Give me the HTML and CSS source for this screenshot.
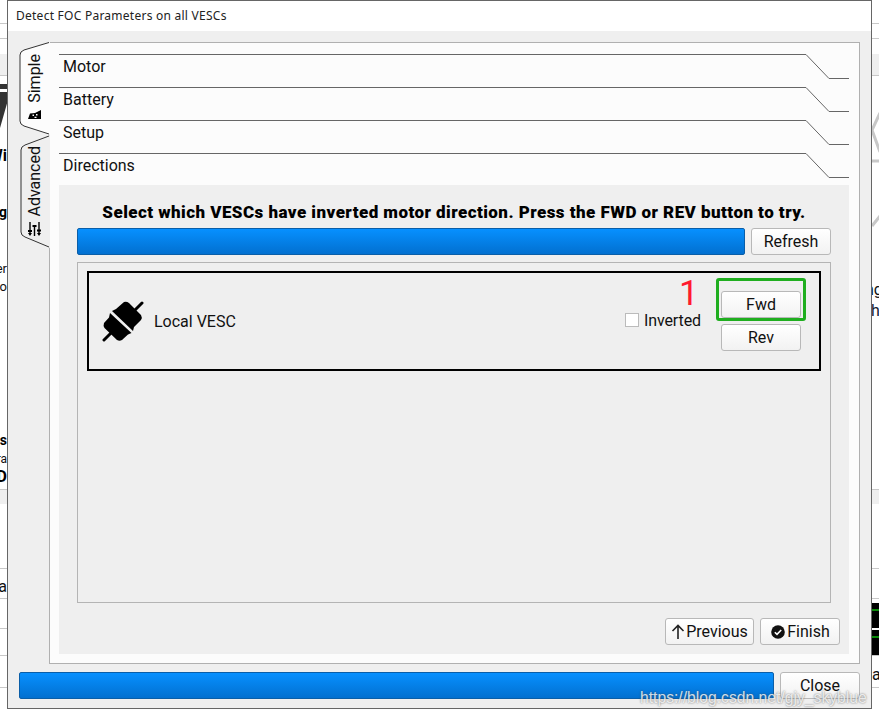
FILE: index.html
```html
<!DOCTYPE html>
<html lang="en">
<head>
<meta charset="utf-8">
<title>Detect FOC Parameters on all VESCs</title>
<link rel="stylesheet" href="styles.css">
</head>
<body>
<div class="backdrop">
  <div class="bg-band bg-l1"></div>
  <div class="bg-band bg-l2"></div>
  <div class="bg-band bg-l3"></div>
  <div class="bg-band bg-l4"></div>
  <div class="bg-band bg-l5"></div>
  <div class="bg-band bg-l6"></div>
  <div class="bg-band bg-l7"></div>
  <div class="bg-band bg-l8"></div>
  <div class="bg-band bg-l9"></div>
  <div class="bg-band bg-l10"></div>
  <div class="bg-band bg-l11"></div>
  <svg class="bg-logo" width="8" height="50" viewBox="0 0 8 50"><path d="M0 0H8V5H0ZM0 8H8V16L0 44Z" fill="#333"/></svg>
  <span class="bg-t bg-wi">Wi</span>
  <span class="bg-t bg-g">g:</span>
  <span class="bg-n bg-er">er</span>
  <span class="bg-n bg-fo">fo</span>
  <span class="bg-t bg-s">s</span>
  <span class="bg-n bg-ra">ra</span>
  <span class="bg-t bg-d">D</span>
  <span class="bg-n bg-a">a</span>
  <span class="bg-r bg-ng">ng</span>
  <span class="bg-r bg-h">h</span>
  <span class="bg-r bg-ia">ia</span>
  <div class="bg-scope"><i></i><i></i><i></i></div>
  <svg class="bg-ring" width="8" height="130" viewBox="0 0 8 130"><path d="M8 13L0 30L8 52M0 61H8M0 126L8 116" fill="none" stroke="#c8c8c8" stroke-width="3"/></svg>
</div>

<div class="dialog">
  <div class="titlebar">Detect FOC Parameters on all VESCs</div>
  <div class="dialog-body">
    <div class="tabs-row">
      <div class="side-tabs">
        <div class="side-tab active">
          <svg class="tab-shape" width="31" height="93" viewBox="0 0 31 93"><path d="M31 0V93L5 84Q1 82.500 1 79V13Q1 9.500 5 8Z" fill="#fcfcfc"/><path d="M30 .5L5 8Q1 9.500 1 13V79Q1 82.500 5 84L30 92" fill="none" stroke="#333"/></svg>
          <div class="tab-label">
            <svg width="13" height="9" viewBox="0 0 13 9"><path d="M0 9L2 3.500L7 3L13 0V9Z" fill="#000"/><path d="M4.500 4.500h1.500v1.500H4.500zM8 4h1.500v1.500H8zM6.500 6.800h2V8h-2z" fill="#fff"/></svg>
            <span>Simple</span>
          </div>
        </div>
        <div class="side-tab second">
          <svg class="tab-shape" width="31" height="113" viewBox="0 0 31 113"><path d="M31 0V113L6 102Q2 100.500 2 97V15Q2 11.500 6 10Z" fill="#efefef"/><path d="M30 1L6 10Q2 11.500 2 15V97Q2 100.500 6 102L30 112" fill="none" stroke="#333"/></svg>
          <div class="tab-label">
            <svg width="13" height="14" viewBox="0 0 13 14" fill="none" stroke="#000" stroke-width="1.400"><path d="M2 0V11M6.500 3V14M11 0V11"/><path d="M0 9H4M4.500 4H8.500M9 8.500H13" stroke-width="2"/><path d="M0 11H4L2 14ZM9 11H13L11 14Z" fill="#000" stroke="none"/></svg>
            <span>Advanced</span>
          </div>
        </div>
      </div>
      <div class="pane">
        <div class="acc"><span>Motor</span><svg class="acc-line" width="790" height="25" viewBox="0 0 790 25"><path d="M0 .5H747L770 24.500H790" fill="none" stroke="#666"/></svg></div>
        <div class="acc"><span>Battery</span><svg class="acc-line" width="790" height="25" viewBox="0 0 790 25"><path d="M0 .5H747L770 24.500H790" fill="none" stroke="#666"/></svg></div>
        <div class="acc"><span>Setup</span><svg class="acc-line" width="790" height="25" viewBox="0 0 790 25"><path d="M0 .5H747L770 24.500H790" fill="none" stroke="#666"/></svg></div>
        <div class="acc"><span>Directions</span><svg class="acc-line" width="790" height="25" viewBox="0 0 790 25"><path d="M0 .5H747L770 24.500H790" fill="none" stroke="#666"/></svg></div>
        <div class="page">
          <div class="heading">Select which VESCs have inverted motor direction. Press the FWD or REV button to try.</div>
          <div class="bar-row">
            <div class="bar"></div>
            <button class="btn">Refresh</button>
          </div>
          <div class="list">
            <div class="vesc">
              <svg class="plug" width="43" height="43" viewBox="0 0 43 43"><path d="M40 3L32 11M2 40L10 32" stroke="#000" stroke-width="3" stroke-linecap="round"/><path d="M10 11L14 9L22 2Q24.500 1 27 3L39 15Q40.500 17.500 39 20L32 27L31 31Z" fill="#000"/><path d="M8 13L29.500 33L26 34.500L20 40Q17.500 41.500 15 40L2.500 28Q1 25.500 2 23L7 17.500Z" fill="#000"/></svg>
              <span class="vesc-name">Local VESC</span>
              <label class="check"><i class="box"></i>Inverted</label>
              <div class="vesc-btns">
                <button class="btn">Fwd</button>
                <button class="btn">Rev</button>
              </div>
              <span class="mark">1</span>
              <span class="highlight"></span>
            </div>
          </div>
          <div class="nav-row">
            <button class="btn icon-btn"><svg width="14" height="15" viewBox="0 0 14 15" fill="none" stroke="#222" stroke-width="1.600"><path d="M7 15V2M1.500 7L7 1.500L12.500 7"/></svg>Previous</button>
            <button class="btn icon-btn finish"><svg width="14" height="14" viewBox="0 0 14 14"><circle cx="7" cy="7" r="6.800" fill="#111"/><path d="M3.800 7.200L6 9.400L10.200 5" fill="none" stroke="#fff" stroke-width="1.600"/></svg>Finish</button>
          </div>
        </div>
      </div>
    </div>
    <div class="bottom-row">
      <div class="bar"></div>
      <button class="btn">Close</button>
    </div>
  </div>
</div>
<div class="watermark">https://blog.csdn.net/gjy_skyblue</div>
</body>
</html>
```
FILE: styles.css
```css
* { box-sizing: border-box; }
html, body { margin: 0; padding: 0; }
body {
  width: 879px;
  height: 717px;
  overflow: hidden;
  background: #fff;
  position: relative;
  font-family: Roboto, sans-serif;
  color: #111;
}

/* window behind the dialog */
.backdrop { position: absolute; inset: 0; }
.bg-band { position: absolute; left: 0; right: 0; height: 1px; background: #c8c8c8; }
.bg-l1 { top: 23px; }
.bg-l2 { top: 38px; }
.bg-l3 { top: 54px; height: 21px; background: #efefef; }
.bg-l4 { top: 75px; }
.bg-l5 { top: 489px; }
.bg-l6 { top: 490px; height: 14px; background: #efefef; }
.bg-l7 { top: 568px; }
.bg-l8 { top: 598px; }
.bg-l9 { top: 628px; }
.bg-l10 { top: 655px; }
.bg-l11 { top: 687px; }
.bg-logo { position: absolute; left: 0; top: 84px; }
.bg-t, .bg-n {
  position: absolute;
  left: 0;
  width: 7px;
  overflow: hidden;
  direction: rtl;
  white-space: nowrap;
  font-size: 14px;
  line-height: 16px;
}
.bg-t { font-weight: 700; color: #000; }
.bg-wi { top: 147px; font-size: 16px; line-height: 18px; }
.bg-g { top: 204px; }
.bg-er { top: 261px; font-size: 13px; }
.bg-fo { top: 279px; font-size: 13px; }
.bg-s { top: 432px; }
.bg-ra { top: 451px; font-size: 12px; }
.bg-d { top: 468px; font-size: 16px; line-height: 18px; }
.bg-a { top: 578px; font-size: 16px; line-height: 18px; }
.bg-r { position: absolute; font-size: 16px; line-height: 18px; white-space: nowrap; }
.bg-ng { top: 281px; left: 865px; }
.bg-h { top: 302px; left: 871px; color: #123; }
.bg-ia { top: 666px; left: 868px; }
.bg-scope { position: absolute; left: 872px; top: 603px; width: 7px; height: 52px; background: #000; }
.bg-scope i { position: absolute; left: 0; right: 0; height: 2px; background: #0a8a0a; }
.bg-scope i:nth-child(1) { top: 6px; }
.bg-scope i:nth-child(2) { top: 25px; background: #fff; }
.bg-scope i:nth-child(3) { top: 33px; }
.bg-ring { position: absolute; left: 872px; top: 100px; }

/* dialog */
.dialog {
  position: absolute;
  left: 7px;
  top: 0;
  width: 865px;
  height: 709px;
  border: 1px solid #666;
  background: #efefef;
  display: flex;
  flex-direction: column;
}
.titlebar {
  height: 30px;
  flex: none;
  background: #fff;
  font-family: "Noto Sans", sans-serif;
  font-size: 12px;
  line-height: 30px;
  padding-left: 8px;
  letter-spacing: 0.25px;
  color: #222;
}
.dialog-body { flex: 1; display: flex; flex-direction: column; padding: 11px 11px 0; }
.tabs-row { display: flex; height: 622px; flex: none; }
.side-tabs { width: 30px; flex: none; position: relative; z-index: 1; }
.side-tab { position: relative; width: 31px; }
.side-tab.active { height: 93px; }
.side-tab.second { height: 113px; }
.tab-shape { display: block; position: absolute; left: 0; top: 0; }
.tab-label {
  position: absolute;
  left: 0;
  right: 0;
  top: 0;
  display: flex;
  flex-direction: column-reverse;
  align-items: center;
  justify-content: flex-start;
}
.side-tab.active .tab-label { bottom: 16px; }
.side-tab.second .tab-label { bottom: 12px; }
.tab-label span {
  writing-mode: vertical-rl;
  transform: rotate(180deg);
  font-size: 16px;
  line-height: 22px;
}
.side-tab.active .tab-label span { margin-bottom: 7px; }
.side-tab.second .tab-label span { margin-bottom: 5px; }
.pane {
  flex: 1;
  background: #fcfcfc;
  border: 1px solid #b0b0b0;
  padding: 11px 10px 9px 9px;
  display: flex;
  flex-direction: column;
}
.acc { height: 33px; flex: none; position: relative; }
.acc span { position: absolute; left: 4px; top: 3px; font-size: 16px; line-height: 19px; }
.acc-line { position: absolute; left: 0; top: 0; display: block; }
.page {
  flex: 1;
  background: #efefef;
  margin-top: -1px;
  padding: 0 18px;
  display: flex;
  flex-direction: column;
  position: relative;
}
.heading {
  text-align: center;
  font-size: 17px;
  font-weight: 900;
  line-height: 20px;
  margin-top: 17px;
  color: #000;
  white-space: nowrap;
  letter-spacing: 0.45px;
}
.bar-row, .bottom-row { display: flex; gap: 6px; height: 27px; flex: none; }
.bar-row { margin-top: 6px; }
.bar {
  flex: 1;
  border: 1px solid #0a5ea8;
  border-radius: 2px;
  background: linear-gradient(#0790ff, #0270d0);
}
.btn {
  width: 80px;
  height: 27px;
  flex: none;
  border: 1px solid #b8b8b8;
  border-radius: 3px;
  background: linear-gradient(#fff, #f2f2f2);
  font-family: Roboto, sans-serif;
  font-size: 16px;
  color: #111;
  padding: 0;
  display: inline-flex;
  align-items: center;
  justify-content: center;
}
.list {
  height: 341px;
  flex: none;
  margin-top: 7px;
  border: 1px solid #b4b4b4;
  padding: 8px 9px;
}
.vesc {
  height: 100px;
  border: 2px solid #000;
  display: flex;
  align-items: center;
  position: relative;
}
.plug { margin-left: 13px; flex: none; }
.vesc-name { font-size: 16px; margin-left: 9px; flex: 1; }
.check { display: flex; align-items: center; font-size: 16px; gap: 5px; margin-right: 20px; margin-top: -2px; letter-spacing: -0.1px; }
.box { width: 14px; height: 14px; background: #fff; border: 1px solid #bbb; display: block; }
.vesc-btns { display: flex; flex-direction: column; gap: 6px; margin-right: 18px; }
.mark { position: absolute; left: 590px; top: 3px; font-size: 35px; line-height: 36px; color: #ff1a2e; }
.highlight { position: absolute; left: 627px; top: 5px; width: 90px; height: 43px; border: 3px solid #1fae1f; border-radius: 3px; }
.nav-row { display: flex; justify-content: flex-end; gap: 6px; margin: 15px -9px 0 0; }
.icon-btn { gap: 1px; width: 80px; }
.icon-btn:first-child { width: 89px; }
.icon-btn.finish { gap: 2px; padding-left: 1px; }
.bottom-row { margin-top: 8px; }
.watermark {
  position: absolute;
  left: 640px;
  top: 689px;
  font-family: "Liberation Sans", sans-serif;
  font-size: 15.7px;
  line-height: 18px;
  color: rgba(255,255,255,0.8);
  text-shadow: 0 0 2px rgba(70,70,70,0.8);
  white-space: nowrap;
}
```
